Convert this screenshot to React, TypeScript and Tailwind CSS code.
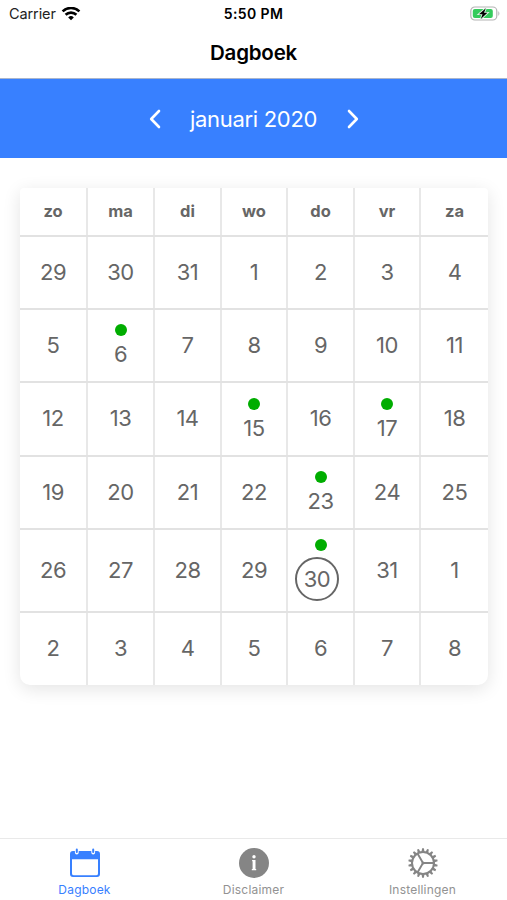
import React from "react";

type Day = { n: number; dot?: boolean; today?: boolean };

const weekdays = ["zo", "ma", "di", "wo", "do", "vr", "za"];

const weeks: Day[][] = [
  [{ n: 29 }, { n: 30 }, { n: 31 }, { n: 1 }, { n: 2 }, { n: 3 }, { n: 4 }],
  [{ n: 5 }, { n: 6, dot: true }, { n: 7 }, { n: 8 }, { n: 9 }, { n: 10 }, { n: 11 }],
  [{ n: 12 }, { n: 13 }, { n: 14 }, { n: 15, dot: true }, { n: 16 }, { n: 17, dot: true }, { n: 18 }],
  [{ n: 19 }, { n: 20 }, { n: 21 }, { n: 22 }, { n: 23, dot: true }, { n: 24 }, { n: 25 }],
  [{ n: 26 }, { n: 27 }, { n: 28 }, { n: 29 }, { n: 30, dot: true, today: true }, { n: 31 }, { n: 1 }],
  [{ n: 2 }, { n: 3 }, { n: 4 }, { n: 5 }, { n: 6 }, { n: 7 }, { n: 8 }],
];

const columns = "grid grid-cols-[66px_67px_67px_66px_67px_66px_69px]";

function WifiIcon() {
  return (
    <svg className="mb-px ml-[5px] h-[14px] w-[20px]" viewBox="0 0 20 14" fill="none" stroke="#000" strokeWidth="2.6">
      <path d="M1.6 4.4 A12 12 0 0 1 18.4 4.4" />
      <path d="M4.6 7.8 A7.7 7.7 0 0 1 15.4 7.8" />
      <path d="M10 13.2 L7.2 10.4 A4 4 0 0 1 12.8 10.4 Z" fill="#000" stroke="none" />
    </svg>
  );
}

function BatteryIcon() {
  return (
    <svg className="h-[16px] w-[31px]" viewBox="0 0 31 16">
      <rect x="0.8" y="1" width="26" height="13" rx="4" fill="#fff" stroke="#b4b4b4" strokeWidth="1.2" />
      <rect x="2.8" y="3" width="20" height="9" rx="2" fill="#35cb5c" />
      <path d="M28.3 5 Q30.5 7.5 28.3 10 Z" fill="#b4b4b4" />
      <path d="M15.8 2.3 L9 8.2 H12.5 L10.8 13 L17.4 6.8 H14 Z" fill="#000" stroke="#d8f5df" strokeWidth="1.8" paintOrder="stroke" />
    </svg>
  );
}

function Chevron({ dir }: { dir: "left" | "right" }) {
  return (
    <svg className="h-[20px] w-[12px]" viewBox="0 0 12 20" fill="none" stroke="#fff" strokeWidth="2.6" strokeLinecap="round" strokeLinejoin="round">
      <path d={dir === "left" ? "M10 2 L2.2 10 L10 18" : "M2 2 L9.8 10 L2 18"} />
    </svg>
  );
}

function CalendarIcon() {
  return (
    <svg className="h-[30px] w-[32px]" viewBox="0 0 32 30">
      <path fillRule="evenodd" fill="#3880ff" d="M4 3 H28 Q31 3 31 6 V26 Q31 29 28 29 H4 Q1 29 1 26 V6 Q1 3 4 3 Z M3 11.3 V25.4 Q3 27.3 5 27.3 H27 Q29 27.3 29 25.4 V11.3 Z" />
      <path d="M7.8 1 V4.5 M24.2 1 V4.5" stroke="#fff" strokeWidth="3.8" strokeLinecap="round" />
      <path d="M7.8 1.5 V4 M24.2 1.5 V4" stroke="#3880ff" strokeWidth="2" strokeLinecap="round" />
    </svg>
  );
}

function InfoIcon() {
  return (
    <svg className="h-[30px] w-[30px]" viewBox="0 0 30 30">
      <circle cx="15" cy="15" r="15" fill="#858585" />
      <circle cx="15" cy="8.8" r="1.7" fill="#fff" />
      <path d="M13.1 12 H16.5 V21 H17.2 V22.2 H12.8 V21 H13.6 V13.2 H13.1 Z" fill="#fff" />
    </svg>
  );
}

const teeth = Array.from({ length: 18 }, (_, i) => i * 20);

function GearIcon() {
  return (
    <svg className="h-[30px] w-[30px]" viewBox="0 0 30 30" fill="none" stroke="#858585">
      <circle cx="15" cy="15" r="11" strokeWidth="2" />
      {teeth.map((angle) => (
        <path key={angle} d="M13.5 4 L14.1 0.3 H15.9 L16.5 4 Z" fill="#858585" stroke="none" transform={`rotate(${angle} 15 15)`} />
      ))}
      <path d="M15 15 H26 M15 15 L9.5 5.5 M15 15 L9.5 24.5" strokeWidth="1.9" />
      <circle cx="15" cy="15" r="1.5" fill="#858585" stroke="none" />
    </svg>
  );
}

function DayCell({ day, first }: { day: Day; first: boolean }) {
  const inset = day.dot && !day.today ? "pt-px" : "pb-0.5";
  return (
    <div className={`flex flex-col items-center justify-center ${inset} ${first ? "" : "border-l-2 border-[#e8e8e8]"}`}>
      {day.dot && <span className={`size-[12px] shrink-0 rounded-full bg-[#00ad00] ${day.today ? "mb-[6px]" : "mb-[4px]"}`} />}
      {day.today ? (
        <span className="-ml-[7px] flex size-[44px] shrink-0 items-center justify-center rounded-full border-2 border-[#666] pt-px">{day.n}</span>
      ) : (
        <span className="leading-[28px]">{day.n}</span>
      )}
    </div>
  );
}

export default function App() {
  return (
    <div className="flex h-[900px] w-[507px] flex-col overflow-hidden bg-white font-['Inter','Liberation_Sans',sans-serif]">
      <header className="h-[79px] shrink-0 border-b border-[#a9b5cc] text-black">
        <div className="grid h-[28px] grid-cols-3 items-center">
          <div className="flex items-center pl-[9px] text-[14.5px] text-[#222]">
            <span className="tracking-[-0.1px]">Carrier</span>
            <WifiIcon />
          </div>
          <div className="text-center text-[14px] leading-[18px] font-semibold tracking-[0.4px]">5:50 PM</div>
          <div className="flex justify-end pr-[6px] pb-px"><BatteryIcon /></div>
        </div>
        <h1 className="pt-px text-center text-[20.5px] leading-[48px] font-semibold tracking-[-0.2px]">Dagboek</h1>
      </header>

      <div className="flex h-[79px] shrink-0 items-center justify-center bg-[#3880ff] text-white">
        <Chevron dir="left" />
        <span className="w-[186px] pt-0.5 text-center text-[22px] tracking-[-0.3px]">januari 2020</span>
        <Chevron dir="right" />
      </div>

      <main className="flex-1 pt-[30px] pl-[20px]">
        <div className="grid h-[497px] w-[468px] grid-rows-[47px_73px_73px_74px_73px_83px_74px] overflow-hidden rounded-t-[4px] rounded-b-[10px] bg-white text-[22px] tracking-[-0.5px] text-[#666] shadow-[0_4px_18px_rgba(0,0,0,0.11)]">
          <div className={`${columns} text-[16.5px] font-bold tracking-normal`}>
            {weekdays.map((name, i) => (
              <div key={name} className={`flex items-center justify-center ${i ? "border-l-2 border-[#e8e8e8]" : ""}`}>{name}</div>
            ))}
          </div>
          {weeks.map((week, w) => (
            <div key={w} className={`${columns} border-t-2 border-[#e2e2e2]`}>
              {week.map((day, i) => <DayCell key={i} day={day} first={i === 0} />)}
            </div>
          ))}
        </div>
      </main>

      <nav className="grid h-[62px] shrink-0 grid-cols-3 border-t border-[#e9e9e9] bg-white text-[12px] tracking-[0.2px] text-[#929292]">
        <div className="flex flex-col items-center pt-[9px] text-[#3880ff]">
          <CalendarIcon />
          <span className="mt-[3px] leading-[17px]">Dagboek</span>
        </div>
        <div className="flex flex-col items-center pt-[9px]">
          <InfoIcon />
          <span className="mt-[3px] leading-[17px]">Disclaimer</span>
        </div>
        <div className="flex flex-col items-center pt-[9px]">
          <GearIcon />
          <span className="mt-[3px] leading-[17px]">Instellingen</span>
        </div>
      </nav>
    </div>
  );
}
